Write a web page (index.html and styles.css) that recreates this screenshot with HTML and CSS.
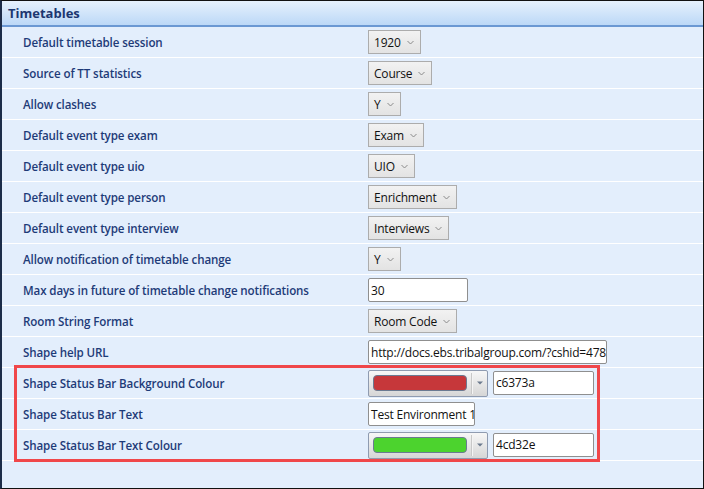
FILE: index.html
```html
<!DOCTYPE html>
<html>
<head>
<meta charset="utf-8">
<link rel="stylesheet" href="styles.css">
</head>
<body>
<div class="panel">
  <div class="header">Timetables</div>
  <div class="rows">
    <div class="row"><div class="label">Default timetable session</div><div class="control"><span class="select">1920<svg class="chev" width="7" height="5" viewBox="0 0 7 5"><polyline points="0.5,1 3.5,4 6.5,1" fill="none" stroke="#8a8a8a" stroke-width="1"/></svg></span></div></div>
    <div class="row"><div class="label">Source of TT statistics</div><div class="control"><span class="select">Course<svg class="chev" width="7" height="5" viewBox="0 0 7 5"><polyline points="0.5,1 3.5,4 6.5,1" fill="none" stroke="#8a8a8a" stroke-width="1"/></svg></span></div></div>
    <div class="row"><div class="label">Allow clashes</div><div class="control"><span class="select">Y<svg class="chev" width="7" height="5" viewBox="0 0 7 5"><polyline points="0.5,1 3.5,4 6.5,1" fill="none" stroke="#8a8a8a" stroke-width="1"/></svg></span></div></div>
    <div class="row"><div class="label">Default event type exam</div><div class="control"><span class="select">Exam<svg class="chev" width="7" height="5" viewBox="0 0 7 5"><polyline points="0.5,1 3.5,4 6.5,1" fill="none" stroke="#8a8a8a" stroke-width="1"/></svg></span></div></div>
    <div class="row"><div class="label">Default event type uio</div><div class="control"><span class="select">UIO<svg class="chev" width="7" height="5" viewBox="0 0 7 5"><polyline points="0.5,1 3.5,4 6.5,1" fill="none" stroke="#8a8a8a" stroke-width="1"/></svg></span></div></div>
    <div class="row"><div class="label">Default event type person</div><div class="control"><span class="select">Enrichment<svg class="chev" width="7" height="5" viewBox="0 0 7 5"><polyline points="0.5,1 3.5,4 6.5,1" fill="none" stroke="#8a8a8a" stroke-width="1"/></svg></span></div></div>
    <div class="row"><div class="label">Default event type interview</div><div class="control"><span class="select">Interviews<svg class="chev" width="7" height="5" viewBox="0 0 7 5"><polyline points="0.5,1 3.5,4 6.5,1" fill="none" stroke="#8a8a8a" stroke-width="1"/></svg></span></div></div>
    <div class="row"><div class="label">Allow notification of timetable change</div><div class="control"><span class="select">Y<svg class="chev" width="7" height="5" viewBox="0 0 7 5"><polyline points="0.5,1 3.5,4 6.5,1" fill="none" stroke="#8a8a8a" stroke-width="1"/></svg></span></div></div>
    <div class="row"><div class="label">Max days in future of timetable change notifications</div><div class="control"><span class="input w-days">30</span></div></div>
    <div class="row"><div class="label">Room String Format</div><div class="control"><span class="select">Room Code<svg class="chev" width="7" height="5" viewBox="0 0 7 5"><polyline points="0.5,1 3.5,4 6.5,1" fill="none" stroke="#8a8a8a" stroke-width="1"/></svg></span></div></div>
    <div class="row"><div class="label">Shape help URL</div><div class="control"><span class="input w-url">http://docs.ebs.tribalgroup.com/?cshid=478</span></div></div>
    <div class="row"><div class="label">Shape Status Bar Background Colour</div><div class="control"><span class="picker"><span class="swatch swatch-red"></span><span class="drop"><svg width="6" height="4" viewBox="0 0 6 4"><polygon points="0,0.5 6,0.5 3,3.5" fill="#6c7a8e"/></svg></span></span><span class="input w-hex">c6373a</span></div></div>
    <div class="row"><div class="label">Shape Status Bar Text</div><div class="control"><span class="input w-text">Test Environment 1</span></div></div>
    <div class="row"><div class="label">Shape Status Bar Text Colour</div><div class="control"><span class="picker"><span class="swatch swatch-green"></span><span class="drop"><svg width="6" height="4" viewBox="0 0 6 4"><polygon points="0,0.5 6,0.5 3,3.5" fill="#6c7a8e"/></svg></span></span><span class="input w-hex">4cd32e</span></div></div>
  </div>
  <div class="highlight"></div>
</div>
</body>
</html>
```
FILE: styles.css
```css
* { box-sizing: border-box; }
html, body { margin: 0; padding: 0; }
body {
  width: 704px;
  height: 489px;
  background: #ffffff;
  font-family: "Open Sans", "Noto Sans", sans-serif;
}
.panel {
  position: relative;
  width: 704px;
  height: 489px;
  border: 1px solid #111;
  border-left: 2px solid #1c2c48;
  background: #e3eefc;
  overflow: hidden;
}
.header {
  height: 26px;
  padding-left: 6px;
  border-bottom: 2px solid #6b98d3;
  background: linear-gradient(#e6f1fd, #bcd8f7);
  color: #1c3770;
  font-weight: 700;
  font-size: 13px;
  line-height: 24px;
}
.rows { display: flex; flex-direction: column; }
.row {
  display: flex;
  align-items: center;
  height: 31px;
  border-bottom: 1px solid #ffffff;
}
.label {
  width: 366px;
  padding-left: 21px;
  color: #1e3b78;
  font-weight: 600;
  font-size: 11.6px;
  letter-spacing: -0.12px;
}
.control {
  display: flex;
  align-items: center;
  gap: 5px;
  font-size: 12px;
  color: #111;
}
.select {
  display: inline-flex;
  align-items: center;
  gap: 6px;
  height: 24px;
  padding: 0 6px 0 5px;
  border: 1px solid #acacac;
  background: linear-gradient(#f2f2f2, #e3e3e3);
  letter-spacing: -0.2px;
}
.chev { margin-top: 1px; }
.input {
  display: flex;
  align-items: center;
  height: 24px;
  padding: 0 2px;
  border: 1px solid #8f8f8f;
  border-radius: 2px;
  background: #fff;
  white-space: nowrap;
  overflow: hidden;
  letter-spacing: -0.2px;
}
.w-days { width: 100px; }
.w-url { width: 239px; }
.w-text { width: 107px; }
.w-hex { width: 101px; align-items: flex-start; padding-top: 2px; }
.picker {
  display: flex;
  align-items: center;
  width: 120px;
  height: 27px;
  padding-left: 4px;
  border: 1px solid #8f9bb0;
  border-radius: 2px;
  background: linear-gradient(#f7f7f7, #d6d6d6);
}
.swatch {
  width: 94px;
  height: 16px;
  border: 1px solid #6b7a91;
  border-radius: 4px;
}
.swatch-red { background: #c6373a; }
.swatch-green { background: #4cd32e; }
.drop {
  display: flex;
  align-items: center;
  justify-content: center;
  height: 21px;
  margin-left: 5px;
  flex: 1;
  border-left: 1px solid #f4f4f4;
  box-shadow: -1px 0 0 #c8c8c8;
}
.highlight {
  position: absolute;
  left: 12px;
  top: 364px;
  width: 586px;
  height: 97px;
  border: 3px solid #f0474a;
}
```
